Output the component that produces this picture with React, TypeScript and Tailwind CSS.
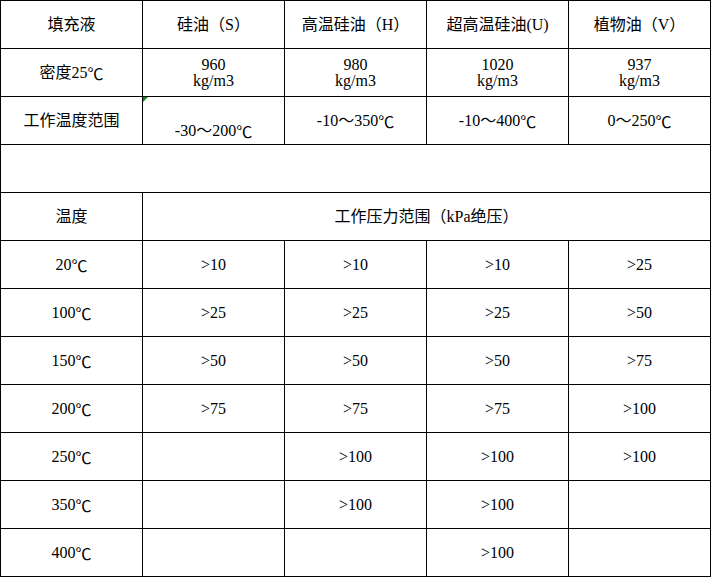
const font = { fontFamily: '"Liberation Serif", "Noto Sans CJK SC", serif' };

const header = ['填充液', '硅油（S）', '高温硅油（H）', '超高温硅油(U)', '植物油（V）'];
const density = ['960', '980', '1020', '937'];
const ranges = ['-30～200℃', '-10～350℃', '-10～400℃', '0～250℃'];

const pressure: [string, string[]][] = [
  ['20℃', ['>10', '>10', '>10', '>25']],
  ['100℃', ['>25', '>25', '>25', '>50']],
  ['150℃', ['>50', '>50', '>50', '>75']],
  ['200℃', ['>75', '>75', '>75', '>100']],
  ['250℃', ['', '>100', '>100', '>100']],
  ['350℃', ['', '>100', '>100', '']],
  ['400℃', ['', '', '>100', '']],
];

// ℃ from the CJK font so it's one wide glyph like the original
function Deg({ text }: { text: string }) {
  const parts = text.split('℃');
  if (parts.length === 1) return <>{text}</>;
  return (
    <>
      {parts[0]}
      <span style={{ fontFamily: '"Noto Sans CJK SC", sans-serif' }}>℃</span>
      {parts[1]}
    </>
  );
}

function Cell({ children, className = '' }: { children?: React.ReactNode; className?: string }) {
  return (
    <div className={`bg-white flex items-center justify-center text-center text-[16px] leading-[16px] text-black ${className}`}>
      {children}
    </div>
  );
}

export default function App() {
  return (
    <div className="w-[711px] h-[577px] bg-white" style={font}>
      <div className="grid grid-cols-[repeat(5,141px)] auto-rows-[47px] gap-px p-px bg-black">
        {header.map((h) => (
          <Cell key={h}>{h}</Cell>
        ))}

        <Cell>
          <Deg text="密度25℃" />
        </Cell>
        {density.map((d) => (
          <Cell key={d} className="flex-col">
            <span>{d}</span>
            <span>kg/m3</span>
          </Cell>
        ))}

        <Cell>工作温度范围</Cell>
        {ranges.map((r, i) => (
          <Cell key={r} className={i === 0 ? 'relative pt-[20px]' : ''}>
            {i === 0 && (
              <span className="absolute left-0 top-0 w-0 h-0 border-t-[5px] border-t-[#1a8a1a] border-r-[5px] border-r-transparent" />
            )}
            <Deg text={r} />
          </Cell>
        ))}

        <Cell className="col-span-5" />

        <Cell>温度</Cell>
        <Cell className="col-span-4">工作压力范围（kPa绝压）</Cell>

        {pressure.map(([t, vals]) => (
          <div key={t} className="contents">
            <Cell>
              <Deg text={t} />
            </Cell>
            {vals.map((v, i) => (
              <Cell key={i}>{v}</Cell>
            ))}
          </div>
        ))}
      </div>
    </div>
  );
}
